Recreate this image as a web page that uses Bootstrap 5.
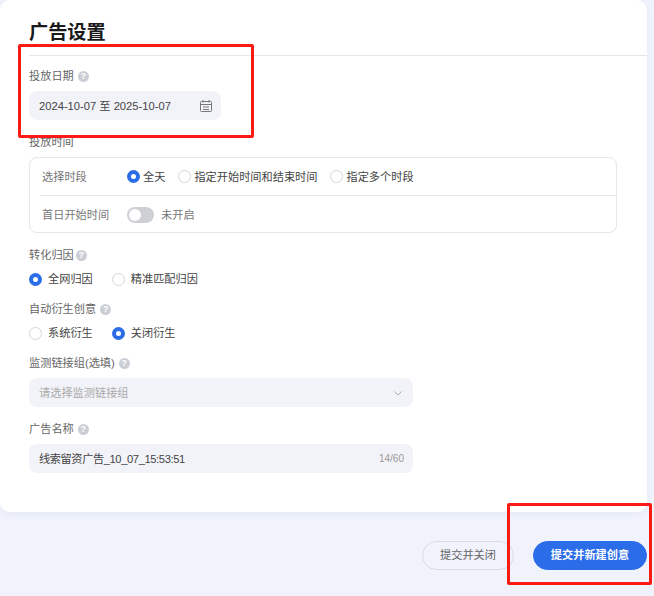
<!DOCTYPE html>
<html lang="zh">
<head>
    <meta charset="UTF-8">
    <meta name="viewport" content="width=device-width, initial-scale=1.0">
    <title>广告设置</title>
    <link href="https://cdn.jsdelivr.net/npm/bootstrap@5.3.0/dist/css/bootstrap.min.css" rel="stylesheet">
    <style>
        html, body { height: 100%; }
        body {
            position: relative;
            overflow: hidden;
            background: #f0f3fc;
            font-family: "Liberation Sans", "Noto Sans CJK SC", sans-serif;
            font-size: 11.2px;
            line-height: 16px;
            color: #333;
        }
        .ad-panel { width: 647px; height: 512px; background: #fff; border-radius: 10px; box-shadow: 0 2px 8px rgba(40, 60, 120, .05); }
        .ad-title { height: 56px; margin-left: 29px; padding-top: 19px; border-bottom: 1px solid #e5e6ea; font-size: 19.2px; line-height: 27px; font-weight: 700; color: #1a1a1a; }
        .ad-body { padding: 12px 30px 0 29px; }
        .ad-label { display: flex; align-items: center; gap: 4px; height: 16px; color: #666; }
        .ad-label-tight { gap: 2px; }
        .ad-help { width: 11px; height: 11px; border-radius: 50%; background: #ccced6; color: #fff; font-size: 9px; line-height: 11px; text-align: center; font-weight: 700; }
        .ad-input { display: flex; align-items: center; justify-content: space-between; height: 29px; padding: 0 10px; background: #f2f3f8; border-radius: 8px; color: #444; }
        .w-date { width: 192px; margin-top: 7px; margin-bottom: 14px; padding-right: 8px; }
        .w-wide { width: 384px; margin-top: 7px; margin-bottom: 14px; }
        .ad-box { width: 588px; height: 76px; margin-top: 7px; margin-bottom: 14px; border: 1px solid #e5e6ea; border-radius: 8px; }
        .ad-row { height: 37px; display: flex; align-items: center; margin-left: 12px; color: #777; }
        .ad-row + .ad-row { border-top: 1px solid #e5e6ea; height: 38px; margin-left: 10px; padding-left: 2px; }
        .ad-row-name { width: 85px; }
        .ad-times { display: flex; align-items: center; gap: 13px; }
        .ad-radio { display: inline-flex; align-items: center; gap: 3px; color: #444; }
        .ad-dot { width: 13px; height: 13px; border-radius: 50%; background: #fff; border: 1px solid #d5d6dc; flex: none; }
        .ad-dot.on { border: 4px solid #2b6de9; }
        .ad-switch { width: 27px; height: 16px; border-radius: 8px; background: #cfd0d6; padding: 2px; margin-right: 7px; }
        .ad-switch::before { content: ""; display: block; width: 12px; height: 12px; border-radius: 50%; background: #fff; }
        .ad-radios { display: flex; gap: 19px; height: 16px; margin-top: 8px; margin-bottom: 14px; align-items: center; }
        .ad-radios .ad-radio { gap: 6px; }
        .ad-muted { color: #aaa; }
        .ad-name { letter-spacing: -.4px; }
        .ad-count { font-size: 10px; color: #999; margin-right: -1px; }
        .ad-foot { height: 84px; width: 647px; padding-top: 29px; gap: 19px; }
        .ad-btn { height: 29px; padding: 0; border-radius: 15px; font-size: 11.2px; line-height: 27px; }
        .ad-btn-close { width: 92px; background: transparent; border: 1px solid #d8dae3; color: #666; }
        .ad-btn-close:hover { background: transparent; color: #666; border-color: #d8dae3; }
        .ad-btn-submit { width: 114px; background: #2b6de9; border: 1px solid #2b6de9; color: #fff; font-weight: 700; }
        .ad-mark { position: absolute; border: 3px solid #fb1a14; border-radius: 2px; pointer-events: none; }
        .mark-date { left: 18px; top: 44px; width: 236px; height: 94px; }
        .mark-btn { left: 507px; top: 503px; width: 145px; height: 82px; }
    </style>
</head>
<body>
<div class="ad-panel">
    <div class="ad-title">广告设置</div>
    <div class="ad-body">
        <div class="ad-label">投放日期 <span class="ad-help">?</span></div>
        <div class="ad-input w-date">
            <span>2024-10-07 至 2025-10-07</span>
            <svg width="14" height="14" viewBox="0 0 14 14" fill="none" stroke="#777" stroke-width="1">
                <rect x="1.5" y="2.5" width="11" height="10" rx="1"/>
                <path d="M4 1v2.5M10 1v2.5M1.5 5.5h11M4 8h6M4 10.5h6"/>
            </svg>
        </div>
        <div class="ad-label">投放时间</div>
        <div class="ad-box">
            <div class="ad-row">
                <div class="ad-row-name">选择时段</div>
                <div class="ad-times">
                    <span class="ad-radio"><span class="ad-dot on"></span>全天</span>
                    <span class="ad-radio"><span class="ad-dot"></span>指定开始时间和结束时间</span>
                    <span class="ad-radio"><span class="ad-dot"></span>指定多个时段</span>
                </div>
            </div>
            <div class="ad-row">
                <div class="ad-row-name">首日开始时间</div>
                <span class="ad-switch"></span>未开启
            </div>
        </div>
        <div class="ad-label ad-label-tight">转化归因 <span class="ad-help">?</span></div>
        <div class="ad-radios">
            <span class="ad-radio"><span class="ad-dot on"></span>全网归因</span>
            <span class="ad-radio"><span class="ad-dot"></span>精准匹配归因</span>
        </div>
        <div class="ad-label">自动衍生创意 <span class="ad-help">?</span></div>
        <div class="ad-radios">
            <span class="ad-radio"><span class="ad-dot"></span>系统衍生</span>
            <span class="ad-radio"><span class="ad-dot on"></span>关闭衍生</span>
        </div>
        <div class="ad-label">监测链接组(选填) <span class="ad-help">?</span></div>
        <div class="ad-input w-wide">
            <span class="ad-muted">请选择监测链接组</span>
            <svg width="10" height="10" viewBox="0 0 10 10" fill="none" stroke="#aaa" stroke-width="1"><path d="M1.5 3.5 5 7l3.5-3.5"/></svg>
        </div>
        <div class="ad-label">广告名称 <span class="ad-help">?</span></div>
        <div class="ad-input w-wide">
            <span class="ad-name">线索留资广告_10_07_15:53:51</span>
            <span class="ad-count">14/60</span>
        </div>
    </div>
</div>
<div class="ad-foot d-flex justify-content-end align-items-start">
    <button type="button" class="btn ad-btn ad-btn-close">提交并关闭</button>
    <button type="button" class="btn ad-btn ad-btn-submit">提交并新建创意</button>
</div>
<div class="ad-mark mark-date"></div>
<div class="ad-mark mark-btn"></div>
<script src="https://cdn.jsdelivr.net/npm/bootstrap@5.3.0/dist/js/bootstrap.bundle.min.js"></script>
</body>
</html>
